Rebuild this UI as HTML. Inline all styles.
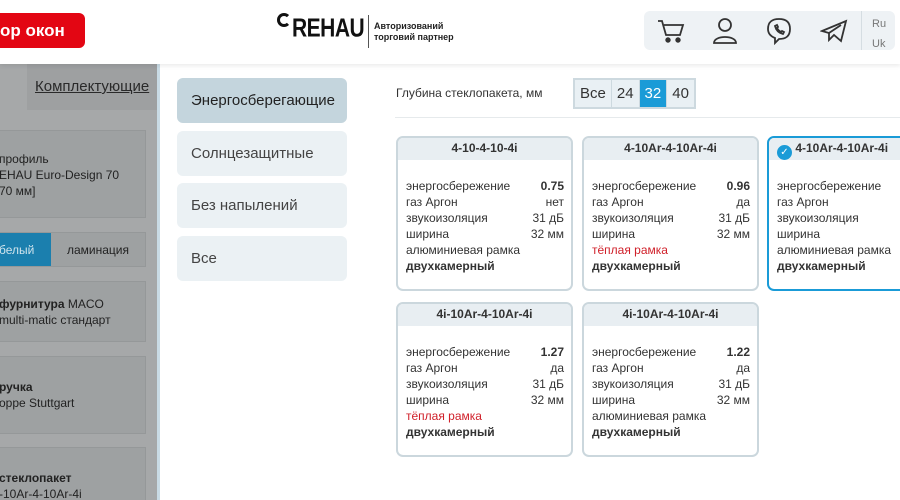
<!DOCTYPE html><html><head><meta charset="utf-8"><style>
*{box-sizing:border-box;margin:0;padding:0}
html,body{width:900px;height:500px;overflow:hidden}
body{background:#fff;font-family:"Liberation Sans","DejaVu Sans",sans-serif;color:#333;position:relative}
.abs{position:absolute}
.hdr{left:0;top:0;width:900px;height:64px;background:#fff;box-shadow:0 2px 4px rgba(0,0,0,.08);z-index:2}
.red{left:-20px;top:13px;width:105px;height:35px;background:#e30613;border-radius:6px;color:#fff;font-size:17px;font-weight:bold;padding:8px 0 0 20px}
.icons{left:644px;top:11px;width:251px;height:39px;background:#eef2f5;border-radius:6px}
.left{left:0;top:64px;width:160px;height:436px;background:#a6a8a9;border-right:3px solid #c9dbe5;overflow:hidden}
.lc{background:#9ea1a2;border:1px solid #959899;font-size:12px;color:#222;line-height:16px}
.mb{left:177px;width:170px;height:45px;background:#ebf1f4;border-radius:6px;font-size:15px;color:#444;padding:14px 0 0 14px}
.card{width:177px;height:155px;border:2px solid #cbd7dd;border-radius:7px;background:#fff;overflow:hidden;font-size:12px;line-height:16px;color:#333}
.card .h{height:22px;background:#e8eef2;text-align:center;font-weight:bold;font-size:12px;line-height:21px}
.card .b{padding:18px 7px 0 8px}
.r{display:flex;justify-content:space-between}
.tog{left:573px;top:78px;height:31px;border:2px solid #cdd9df;display:flex;font-size:15px;background:#e9f0f4}
.tog div{padding:5px 5px 0;height:27px;border-right:1px solid #cdd9df}
</style></head><body>
<div class="abs hdr">
<div class="abs red">ор окон</div>
<div class="abs" style="left:277px;top:13px;width:14px;height:14px;border:3px solid #111;border-right-color:transparent;border-radius:50%"></div>
<div class="abs" style="left:292px;top:17px;font-size:21px;font-weight:bold;letter-spacing:-0.5px;color:#111;transform:scaleY(1.25)">REHAU</div>
<div class="abs" style="left:368px;top:15px;width:1px;height:33px;background:#555"></div>
<div class="abs" style="left:374px;top:21px;font-size:9px;font-weight:bold;line-height:11px;color:#222">Авторизований<br>торговий партнер</div>
<div class="abs icons">
<svg class="abs" style="left:12px;top:7px" width="30" height="26" viewBox="0 0 30 26" fill="none" stroke="#333" stroke-width="1.8"><path d="M2 3h4l4 14h14l3-10H8"/><circle cx="12" cy="22" r="1.8" fill="#333"/><circle cx="22" cy="22" r="1.8" fill="#333"/></svg>
<svg class="abs" style="left:68px;top:6px" width="26" height="28" viewBox="0 0 26 28" fill="none" stroke="#333" stroke-width="1.8"><circle cx="13" cy="8" r="6"/><path d="M2 26c0-8 22-8 22 0z"/></svg>
<svg class="abs" style="left:122px;top:6px" width="26" height="28" viewBox="0 0 26 28" fill="none" stroke="#333" stroke-width="1.8"><path d="M13 2c7 0 11 3 11 10s-4 10-11 10l-4 4v-5c-5-2-7-5-7-9 0-7 4-10 11-10z"/><path d="M9 9c1 4 4 7 8 8l1-2-2-1-1 1c-2-1-3-2-4-4l1-1-1-2z"/></svg>
<svg class="abs" style="left:176px;top:8px" width="28" height="24" viewBox="0 0 28 24" fill="none" stroke="#333" stroke-width="1.8"><path d="M2 12L26 2l-5 20-7-6-5 5v-7z"/><path d="M9 14l12-8"/></svg>
<div class="abs" style="left:217px;top:0;width:1px;height:39px;background:#d5dde2"></div>
<div class="abs" style="left:228px;top:3px;font-size:11px;color:#777;line-height:20px">Ru<br>Uk</div>
</div>
</div>
<div class="abs left">
<div class="abs" style="left:27px;top:0;width:133px;height:46px;background:#9ea0a1"></div>
<div class="abs" style="left:35px;top:14px;font-size:15px;text-decoration:underline;color:#2a2a2a">Комплектующие</div>
<div class="abs lc" style="left:-2px;top:66px;width:148px;height:88px;padding:20px 0 0 0">профиль<br>EHAU Euro-Design 70<br>70 мм]</div>
<div class="abs lc" style="left:-2px;top:168px;width:148px;height:35px;display:flex;font-size:12px">
<div style="width:52px;background:#1b7fae;color:#cfe3ec;padding-top:9px">белый</div><div style="flex:1;text-align:center;padding-top:9px">ламинация</div></div>
<div class="abs lc" style="left:-2px;top:217px;width:148px;height:61px;padding:14px 0 0 0"><b>фурнитура</b> MACO<br>multi-matic стандарт</div>
<div class="abs lc" style="left:-2px;top:292px;width:148px;height:78px;padding:22px 0 0 0"><b>ручка</b><br>oppe Stuttgart</div>
<div class="abs lc" style="left:-2px;top:383px;width:148px;height:60px;padding:22px 0 0 0"><b>стеклопакет</b><br>-10Ar-4-10Ar-4i</div>
</div>
<div class="abs mb" style="top:78px;background:#c4d5dd;color:#222">Энергосберегающие</div>
<div class="abs mb" style="top:131px">Солнцезащитные</div>
<div class="abs mb" style="top:183px">Без напылений</div>
<div class="abs mb" style="top:236px">Все</div>
<div class="abs" style="left:396px;top:86px;font-size:12px;color:#333">Глубина стеклопакета, мм</div>
<div class="abs tog"><div>Все</div><div>24</div><div style="background:#1a9bd7;color:#fff">32</div><div style="border:none">40</div></div>
<div class="abs" style="left:395px;top:117px;width:505px;height:1px;background:#e6eaec"></div>

<div class="abs card" style="left:396px;top:136px"><div class="h">4-10-4-10-4i</div><div class="b">
<div class="r"><span>энергосбережение</span><b>0.75</b></div><div class="r"><span>газ Аргон</span><span>нет</span></div><div class="r"><span>звукоизоляция</span><span>31 дБ</span></div><div class="r"><span>ширина</span><span>32 мм</span></div><div>алюминиевая рамка</div><b>двухкамерный</b></div></div>
<div class="abs card" style="left:582px;top:136px"><div class="h">4-10Ar-4-10Ar-4i</div><div class="b">
<div class="r"><span>энергосбережение</span><b>0.96</b></div><div class="r"><span>газ Аргон</span><span>да</span></div><div class="r"><span>звукоизоляция</span><span>31 дБ</span></div><div class="r"><span>ширина</span><span>32 мм</span></div><div style="color:#d0202a">тёплая рамка</div><b>двухкамерный</b></div></div>
<div class="abs card" style="left:767px;top:136px;width:150px;border-color:#1a9bd7"><div class="h" style="text-align:left;padding-left:8px"><span style="display:inline-block;width:15px;height:15px;border-radius:50%;background:#1a9bd7;color:#fff;font-size:10px;line-height:15px;text-align:center;vertical-align:-3px">✓</span> 4-10Ar-4-10Ar-4i</div><div class="b">
<div>энергосбережение</div><div>газ Аргон</div><div>звукоизоляция</div><div>ширина</div><div>алюминиевая рамка</div><b>двухкамерный</b></div></div>
<div class="abs card" style="left:396px;top:302px"><div class="h">4i-10Ar-4-10Ar-4i</div><div class="b">
<div class="r"><span>энергосбережение</span><b>1.27</b></div><div class="r"><span>газ Аргон</span><span>да</span></div><div class="r"><span>звукоизоляция</span><span>31 дБ</span></div><div class="r"><span>ширина</span><span>32 мм</span></div><div style="color:#d0202a">тёплая рамка</div><b>двухкамерный</b></div></div>
<div class="abs card" style="left:582px;top:302px"><div class="h">4i-10Ar-4-10Ar-4i</div><div class="b">
<div class="r"><span>энергосбережение</span><b>1.22</b></div><div class="r"><span>газ Аргон</span><span>да</span></div><div class="r"><span>звукоизоляция</span><span>31 дБ</span></div><div class="r"><span>ширина</span><span>32 мм</span></div><div>алюминиевая рамка</div><b>двухкамерный</b></div></div>
</body></html>
